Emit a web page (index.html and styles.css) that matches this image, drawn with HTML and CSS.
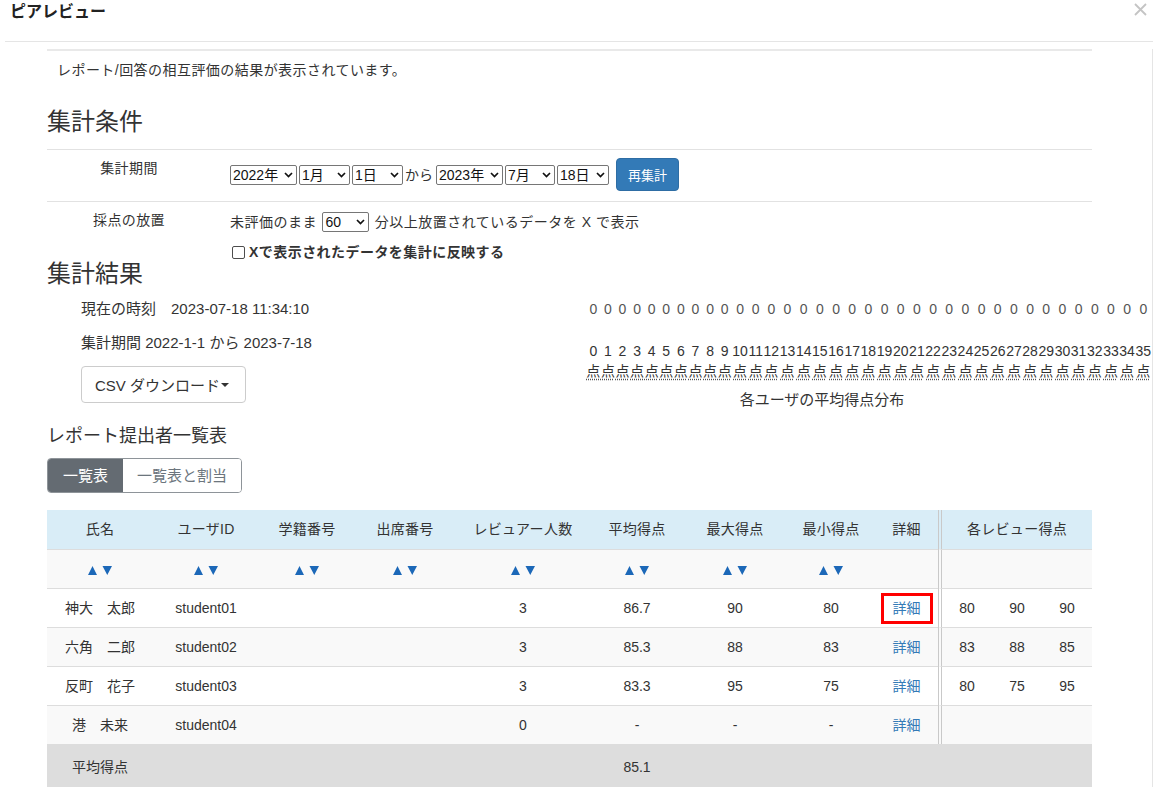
FILE: index.html
```html
<!DOCTYPE html>
<html lang="ja">
<head>
<meta charset="utf-8">
<title>ピアレビュー</title>
<link rel="stylesheet" href="styles.css">
</head>
<body>
<div class="modal">
  <div class="modal-header">
    <h4 class="modal-title">ピアレビュー</h4>
    <button class="close" type="button" aria-label="閉じる">
      <svg width="13" height="13" viewBox="0 0 13 13"><path d="M1 1 L12 12 M12 1 L1 12" stroke="#c4c4c4" stroke-width="1.8" fill="none"/></svg>
    </button>
  </div>
  <div class="modal-body">
    <div class="content">
      <hr class="top-rule">
      <p class="intro">レポート/回答の相互評価の結果が表示されています。</p>

      <h3 class="section-title cond-title">集計条件</h3>
      <div class="form-table">
        <div class="form-row bordered">
          <div class="form-label">集計期間</div>
          <div class="form-field inline">
            <span class="sel sel-y">2022年<svg class="chev" width="9" height="6" viewBox="0 0 9 6"><path d="M1 1 L4.5 4.5 L8 1" stroke="#111" stroke-width="1.7" fill="none"/></svg></span>
            <span class="sel sel-m">1月<svg class="chev" width="9" height="6" viewBox="0 0 9 6"><path d="M1 1 L4.5 4.5 L8 1" stroke="#111" stroke-width="1.7" fill="none"/></svg></span>
            <span class="sel sel-m">1日<svg class="chev" width="9" height="6" viewBox="0 0 9 6"><path d="M1 1 L4.5 4.5 L8 1" stroke="#111" stroke-width="1.7" fill="none"/></svg></span>
            <span class="from">から</span>
            <span class="sel sel-y">2023年<svg class="chev" width="9" height="6" viewBox="0 0 9 6"><path d="M1 1 L4.5 4.5 L8 1" stroke="#111" stroke-width="1.7" fill="none"/></svg></span>
            <span class="sel sel-m2">7月<svg class="chev" width="9" height="6" viewBox="0 0 9 6"><path d="M1 1 L4.5 4.5 L8 1" stroke="#111" stroke-width="1.7" fill="none"/></svg></span>
            <span class="sel sel-d">18日<svg class="chev" width="9" height="6" viewBox="0 0 9 6"><path d="M1 1 L4.5 4.5 L8 1" stroke="#111" stroke-width="1.7" fill="none"/></svg></span>
            <button class="btn-primary" type="button">再集計</button>
          </div>
        </div>
        <div class="form-row">
          <div class="form-label">採点の放置</div>
          <div class="form-field stacked">
            <div class="field-line">未評価のまま <span class="sel sel-min">60<svg class="chev" width="9" height="6" viewBox="0 0 9 6"><path d="M1 1 L4.5 4.5 L8 1" stroke="#111" stroke-width="1.7" fill="none"/></svg></span> 分以上放置されているデータを X で表示</div>
            <label class="check"><input type="checkbox"><span>Xで表示されたデータを集計に反映する</span></label>
          </div>
        </div>
      </div>

      <h3 class="section-title result-title">集計結果</h3>
      <div class="results">
        <div class="results-left">
          <p class="info">現在の時刻<span class="time">2023-07-18 11:34:10</span></p>
          <p class="info">集計期間 2022-1-1 から 2023-7-18</p>
          <button class="btn-default" type="button">CSV ダウンロード<span class="caret"></span></button>
        </div>
        <div class="results-right">
          <table class="dist">
            <tr class="vals">
              <td>0</td><td>0</td><td>0</td><td>0</td><td>0</td><td>0</td><td>0</td><td>0</td><td>0</td><td>0</td>
              <td>0</td><td>0</td><td>0</td><td>0</td><td>0</td><td>0</td><td>0</td><td>0</td><td>0</td><td>0</td>
              <td>0</td><td>0</td><td>0</td><td>0</td><td>0</td><td>0</td><td>0</td><td>0</td><td>0</td><td>0</td>
              <td>0</td><td>0</td><td>0</td><td>0</td><td>0</td><td>0</td>
            </tr>
            <tr class="bars">
              <td></td><td></td><td></td><td></td><td></td><td></td><td></td><td></td><td></td><td></td>
              <td></td><td></td><td></td><td></td><td></td><td></td><td></td><td></td><td></td><td></td>
              <td></td><td></td><td></td><td></td><td></td><td></td><td></td><td></td><td></td><td></td>
              <td></td><td></td><td></td><td></td><td></td><td></td>
            </tr>
            <tr class="labels">
              <td>0<br><span class="pt">点</span></td><td>1<br><span class="pt">点</span></td><td>2<br><span class="pt">点</span></td><td>3<br><span class="pt">点</span></td><td>4<br><span class="pt">点</span></td><td>5<br><span class="pt">点</span></td><td>6<br><span class="pt">点</span></td><td>7<br><span class="pt">点</span></td><td>8<br><span class="pt">点</span></td><td>9<br><span class="pt">点</span></td>
              <td>10<br><span class="pt">点</span></td><td>11<br><span class="pt">点</span></td><td>12<br><span class="pt">点</span></td><td>13<br><span class="pt">点</span></td><td>14<br><span class="pt">点</span></td><td>15<br><span class="pt">点</span></td><td>16<br><span class="pt">点</span></td><td>17<br><span class="pt">点</span></td><td>18<br><span class="pt">点</span></td><td>19<br><span class="pt">点</span></td>
              <td>20<br><span class="pt">点</span></td><td>21<br><span class="pt">点</span></td><td>22<br><span class="pt">点</span></td><td>23<br><span class="pt">点</span></td><td>24<br><span class="pt">点</span></td><td>25<br><span class="pt">点</span></td><td>26<br><span class="pt">点</span></td><td>27<br><span class="pt">点</span></td><td>28<br><span class="pt">点</span></td><td>29<br><span class="pt">点</span></td>
              <td>30<br><span class="pt">点</span></td><td>31<br><span class="pt">点</span></td><td>32<br><span class="pt">点</span></td><td>33<br><span class="pt">点</span></td><td>34<br><span class="pt">点</span></td><td>35<br><span class="pt">点</span></td>
            </tr>
          </table>
          <p class="dist-caption">各ユーザの平均得点分布</p>
        </div>
      </div>

      <h4 class="list-title">レポート提出者一覧表</h4>
      <div class="btn-group">
        <button class="seg active" type="button">一覧表</button>
        <button class="seg" type="button">一覧表と割当</button>
      </div>

      <table class="grid">
        <colgroup>
          <col class="c-name"><col class="c-uid"><col class="c-stno"><col class="c-att"><col class="c-rev">
          <col class="c-avg"><col class="c-max"><col class="c-min"><col class="c-det">
          <col class="c-s1"><col class="c-s2"><col class="c-s3">
        </colgroup>
        <thead>
          <tr>
            <th>氏名</th><th>ユーザID</th><th>学籍番号</th><th>出席番号</th><th>レビュアー人数</th>
            <th>平均得点</th><th>最大得点</th><th>最小得点</th><th>詳細</th>
            <th class="div" colspan="3">各レビュー得点</th>
          </tr>
        </thead>
        <tbody>
          <tr class="sort">
            <td><svg class="arr" width="24" height="9" viewBox="0 0 24 9"><path d="M0 9 L4.5 0 L9 9Z M14.5 0 L24 0 L19.25 9Z" fill="#1c68b8"/></svg></td>
            <td><svg class="arr" width="24" height="9" viewBox="0 0 24 9"><path d="M0 9 L4.5 0 L9 9Z M14.5 0 L24 0 L19.25 9Z" fill="#1c68b8"/></svg></td>
            <td><svg class="arr" width="24" height="9" viewBox="0 0 24 9"><path d="M0 9 L4.5 0 L9 9Z M14.5 0 L24 0 L19.25 9Z" fill="#1c68b8"/></svg></td>
            <td><svg class="arr" width="24" height="9" viewBox="0 0 24 9"><path d="M0 9 L4.5 0 L9 9Z M14.5 0 L24 0 L19.25 9Z" fill="#1c68b8"/></svg></td>
            <td><svg class="arr" width="24" height="9" viewBox="0 0 24 9"><path d="M0 9 L4.5 0 L9 9Z M14.5 0 L24 0 L19.25 9Z" fill="#1c68b8"/></svg></td>
            <td><svg class="arr" width="24" height="9" viewBox="0 0 24 9"><path d="M0 9 L4.5 0 L9 9Z M14.5 0 L24 0 L19.25 9Z" fill="#1c68b8"/></svg></td>
            <td><svg class="arr" width="24" height="9" viewBox="0 0 24 9"><path d="M0 9 L4.5 0 L9 9Z M14.5 0 L24 0 L19.25 9Z" fill="#1c68b8"/></svg></td>
            <td><svg class="arr" width="24" height="9" viewBox="0 0 24 9"><path d="M0 9 L4.5 0 L9 9Z M14.5 0 L24 0 L19.25 9Z" fill="#1c68b8"/></svg></td>
            <td></td>
            <td class="div" colspan="3"></td>
          </tr>
          <tr>
            <td>神大　太郎</td><td>student01</td><td></td><td></td><td>3</td>
            <td>86.7</td><td>90</td><td>80</td><td><a class="link marked" href="#">詳細</a></td>
            <td class="div">80</td><td>90</td><td>90</td>
          </tr>
          <tr>
            <td>六角　二郎</td><td>student02</td><td></td><td></td><td>3</td>
            <td>85.3</td><td>88</td><td>83</td><td><a class="link" href="#">詳細</a></td>
            <td class="div">83</td><td>88</td><td>85</td>
          </tr>
          <tr>
            <td>反町　花子</td><td>student03</td><td></td><td></td><td>3</td>
            <td>83.3</td><td>95</td><td>75</td><td><a class="link" href="#">詳細</a></td>
            <td class="div">80</td><td>75</td><td>95</td>
          </tr>
          <tr>
            <td>港　未来</td><td>student04</td><td></td><td></td><td>0</td>
            <td>-</td><td>-</td><td>-</td><td><a class="link" href="#">詳細</a></td>
            <td class="div"></td><td></td><td></td>
          </tr>
          <tr class="foot">
            <td>平均得点</td><td></td><td></td><td></td><td></td>
            <td>85.1</td><td></td><td></td><td></td>
            <td colspan="3"></td>
          </tr>
        </tbody>
      </table>
    </div>
  </div>
</div>
</body>
</html>
```
FILE: styles.css
```css
* { box-sizing: border-box; }
html, body {
  margin: 0;
  height: 787px;
  overflow: hidden;
  background: #fff;
}
body {
  font-family: "Liberation Sans", Arial, "Noto Sans CJK JP", sans-serif;
  font-size: 14px;
  line-height: 20px;
  color: #333;
}
button { font-family: inherit; }

.modal {
  margin-left: 5px;
  width: 1148px;
}
.modal-header {
  height: 42px;
  border-bottom: 1px solid #e5e5e5;
  display: flex;
  justify-content: space-between;
  align-items: flex-start;
  padding: 2px 6px 0 5px;
}
.modal-title {
  margin: 0;
  font-size: 16px;
  font-weight: bold;
  line-height: 20px;
  color: #222;
}
.close {
  border: 0;
  background: none;
  padding: 0;
  margin-top: 1px;
  width: 13px;
  height: 13px;
  display: block;
}
.close svg { display: block; }

.modal-body {
  border-right: 1px solid #e5e5e5;
  padding-left: 42px;
  min-height: 745px;
}
.content { width: 1045px; }

.top-rule {
  margin: 7px 0 0;
  border: 0;
  border-top: 2px solid #e9e9e9;
  height: 0;
}
.intro {
  margin: 9px 0 0;
  padding-left: 10px;
  letter-spacing: 0.45px;
}

.section-title {
  margin: 0;
  font-size: 24px;
  font-weight: normal;
  color: #333;
}
.cond-title { margin-top: 29px; line-height: 26px; }
.result-title { line-height: 24px; }

.form-table { margin-top: 14px; border-top: 1px solid #e2e2e2; }
.form-row {
  display: grid;
  grid-template-columns: 164px 1fr;
  column-gap: 19px;
  padding-top: 8px;
}
.form-row.bordered {
  padding-bottom: 10px;
  border-bottom: 1px solid #e2e2e2;
}
.form-label { text-align: center; line-height: 20px; letter-spacing: 0.4px; }
.form-field.inline {
  display: flex;
  align-items: center;
  gap: 2px;
}
.form-field.stacked { padding-top: 2px; }
.field-line {
  display: flex;
  align-items: center;
  height: 20px;
  white-space: pre;
  letter-spacing: 0.5px;
}

.sel {
  display: inline-flex;
  align-items: center;
  justify-content: space-between;
  height: 20px;
  border: 1px solid #767676;
  border-radius: 2px;
  padding: 0 3px 0 2px;
  background: #fff;
  color: #111;
  line-height: 18px;
  letter-spacing: 0;
}
.sel-y { width: 67px; }
.sel-m { width: 51px; }
.sel-m2 { width: 50px; }
.sel-d { width: 52px; }
.sel-min { width: 47px; margin: 0 1px; }
.chev { display: block; flex: none; }
.from { margin: 0 1px 0 0; }

.btn-primary {
  height: 33px;
  margin-left: 5px;
  padding: 0 11px;
  font-size: 13px;
  color: #fff;
  background: #337ab7;
  border: 1px solid #2e6da4;
  border-radius: 4px;
}

.check {
  display: flex;
  align-items: center;
  height: 20px;
  margin-top: 10px;
  font-weight: bold;
  letter-spacing: 0.45px;
}
.check input {
  appearance: none;
  -webkit-appearance: none;
  width: 13px;
  height: 13px;
  margin: 0 4px 0 2px;
  border: 1px solid #4d4d4d;
  border-radius: 2px;
  background: #fff;
}

.results {
  display: grid;
  grid-template-columns: 539px 472px;
  align-items: start;
}
.results-left { padding-left: 34px; padding-top: 13px; font-size: 15px; }
.info { margin: 0 0 14px; line-height: 20px; }
.time { margin-left: 15px; }
.btn-default {
  display: inline-flex;
  align-items: center;
  height: 37px;
  width: 165px;
  padding: 0 0 0 13px;
  font-size: 15px;
  color: #333;
  background: #fff;
  border: 1px solid #ccc;
  border-radius: 4px;
  margin-top: -1px;
}
.caret {
  display: inline-block;
  width: 0;
  height: 0;
  margin-left: 1px;
  border-top: 4px solid #333;
  border-left: 4px solid transparent;
  border-right: 4px solid transparent;
}

.results-right { padding-top: 13px; }
.dist { border-collapse: collapse; }
.dist td {
  padding: 0 0.3px;
  text-align: center;
  line-height: 20px;
  font-size: 14px;
  vertical-align: bottom;
}
.dist .vals td { color: #555; }
.dist .bars td { height: 22px; }
.pt {
  text-decoration: underline dotted #555;
  text-underline-offset: 3px;
}
.dist-caption {
  margin: 9px 0 0;
  text-align: center;
  font-size: 15px;
  line-height: 20px;
}

.list-title {
  margin: 16px 0 0;
  font-size: 18px;
  font-weight: normal;
  line-height: 20px;
}
.btn-group {
  display: inline-flex;
  margin-top: 12px;
  border: 1px solid #8e9499;
  border-radius: 4px;
  overflow: hidden;
}
.seg {
  height: 33px;
  padding: 0 14px;
  font-size: 15px;
  line-height: 33px;
  border: 0;
  background: #fff;
  color: #6c757d;
}
.seg.active {
  background: #646b72;
  color: #fff;
  padding: 0 15px;
}

.grid {
  margin-top: 17px;
  width: 1045px;
  table-layout: fixed;
  border-collapse: separate;
  border-spacing: 0;
}
.c-name { width: 106px; }
.c-uid { width: 106px; }
.c-stno { width: 96px; }
.c-att { width: 100px; }
.c-rev { width: 136px; }
.c-avg { width: 92px; }
.c-max { width: 104px; }
.c-min { width: 88px; }
.c-det { width: 63px; }
.c-s1 { width: 54px; }
.c-s2 { width: 50px; }
.c-s3 { width: 50px; }

.grid th {
  background: #d9edf7;
  font-weight: normal;
  text-align: center;
  padding: 9px 2px 10px;
  line-height: 20px;
  letter-spacing: 0.3px;
}
.grid td {
  text-align: center;
  padding: 9px 2px;
  line-height: 20px;
  height: 39px;
  border-top: 1px solid #dddddd;
  background: #fff;
}
.grid tbody tr:nth-child(odd) td { background: #f9f9f9; }
.grid tbody tr.foot td { background: #dddddd; height: 44px; }
.grid .div { border-left: 4px double #c9c9c9; }
.arr { display: inline-block; vertical-align: middle; }

.link { color: #337ab7; text-decoration: none; }
.marked { position: relative; }
.marked::after {
  content: "";
  position: absolute;
  left: -12px;
  right: -12px;
  top: -7px;
  bottom: -8px;
  border: 3px solid #ff0000;
}
```
